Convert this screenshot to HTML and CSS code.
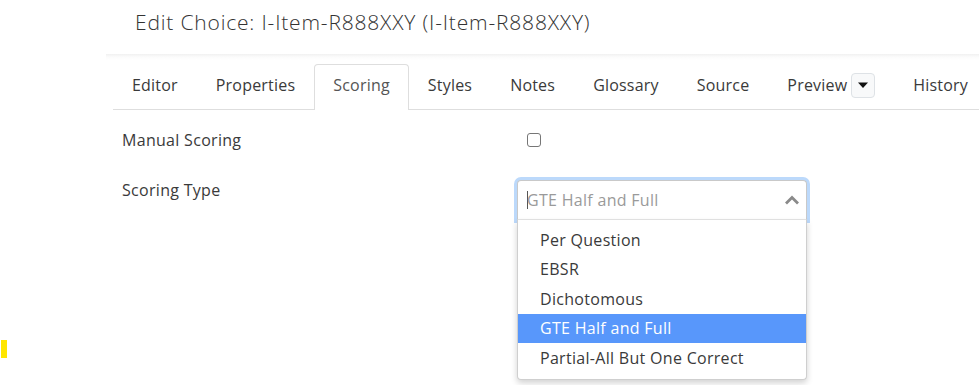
FILE: index.html
```html
<!DOCTYPE html>
<html lang="en">
<head>
<meta charset="utf-8">
<title>Edit Choice</title>
<link rel="stylesheet" href="styles.css">
</head>
<body>
<div class="marker"></div>
<header class="page-head">
  <h1 class="title">Edit Choice: I-Item-R888XXY (I-Item-R888XXY)</h1>
</header>
<main class="panel">
  <nav class="tabs">
    <a class="tab">Editor</a>
    <a class="tab">Properties</a>
    <a class="tab active">Scoring</a>
    <a class="tab">Styles</a>
    <a class="tab">Notes</a>
    <a class="tab">Glossary</a>
    <a class="tab">Source</a>
    <span class="tab tab-split">Preview<span class="split-btn"><svg width="12" height="7" viewBox="0 0 12 7"><path d="M1 0.5h10L6 6z" fill="#111"/></svg></span></span>
    <a class="tab">History</a>
  </nav>
  <form class="form">
    <div class="row row-check">
      <label class="label">Manual Scoring</label>
      <div class="control"><span class="checkbox"></span></div>
    </div>
    <div class="row row-select">
      <label class="label">Scoring Type</label>
      <div class="control">
        <div class="select">
          <div class="select-box">
            <span class="caret"></span><span class="placeholder">GTE Half and Full</span>
            <svg class="chevron" width="16" height="10" viewBox="0 0 16 10"><path d="M2 8.5L8 2.5l6 6" fill="none" stroke="#8a8a8a" stroke-width="2.8"/></svg>
          </div>
          <ul class="options">
            <li class="option">Per Question</li>
            <li class="option">EBSR</li>
            <li class="option">Dichotomous</li>
            <li class="option selected">GTE Half and Full</li>
            <li class="option">Partial-All But One Correct</li>
          </ul>
        </div>
      </div>
    </div>
  </form>
</main>
</body>
</html>
```
FILE: styles.css
```css
* { box-sizing: border-box; }
html, body { margin: 0; padding: 0; background: #fff; }
body {
  font-family: "Open Sans", "Liberation Sans", sans-serif;
  color: #3a3a3a;
  width: 979px;
  height: 385px;
  overflow: hidden;
  position: relative;
}
.marker {
  position: absolute;
  left: 1px;
  top: 340px;
  width: 6px;
  height: 18px;
  background: #ffe600;
}
.page-head {
  height: 54px;
  padding-left: 135px;
  padding-top: 7px;
}
.title {
  margin: 0;
  font-size: 21px;
  font-weight: 300;
  color: #333;
  line-height: 30px;
  letter-spacing: 0.82px;
}
.panel {
  margin-left: 106px;
  background: linear-gradient(#f1f1f1, #fbfbfb 3px, #fff 6px);
  padding-top: 10px;
  height: 331px;
}
.tabs {
  display: flex;
  margin-left: 7px;
  border-bottom: 1px solid #dedede;
  height: 46px;
}
.tab {
  display: flex;
  align-items: center;
  padding: 0 18px 5px;
  height: 46px;
  border: 1px solid transparent;
  border-bottom: none;
  font-size: 16px;
  letter-spacing: 0.2px;
  color: #3a3a3a;
  margin-bottom: -1px;
  white-space: nowrap;
}
.tab.active {
  border-color: #dedede;
  border-radius: 4px 4px 0 0;
  background: #fff;
  color: #555;
}
.split-btn {
  display: inline-flex;
  align-items: center;
  justify-content: center;
  width: 24px;
  height: 25px;
  margin-left: 4px;
  border: 1px solid #dee2e6;
  border-radius: 4px;
  background: #f8f9fa;
}
.form {
  padding-left: 16px;
  padding-top: 10px;
}
.row {
  display: flex;
}
.label {
  width: 395px;
  font-size: 16px;
  letter-spacing: 0.3px;
  line-height: 20px;
  color: #3a3a3a;
}
.row-check { height: 40px; align-items: center; }
.row-select { margin-top: 20px; }
.checkbox {
  display: block;
  margin-left: 10px;
  width: 14px;
  height: 14px;
  border: 1px solid #767676;
  border-radius: 3px;
  background: #fff;
}
.select {
  width: 290px;
}
.select-box {
  height: 40px;
  border: 1px solid #c9c9c9;
  border-bottom-color: #e6e6e6;
  border-radius: 4px 4px 0 0;
  box-shadow: 0 0 0 3px #bcd9fb;
  display: flex;
  align-items: center;
  padding-left: 9px;
  padding-right: 6px;
  background: #fff;
  position: relative;
}
.caret {
  width: 1px;
  height: 18px;
  background: #555;
  margin-right: -1px;
}
.placeholder {
  font-size: 16px;
  letter-spacing: 0.3px;
  color: #9a9a9a;
  flex: 1;
}
.options {
  list-style: none;
  margin: 0;
  padding: 5px 0 6px;
  border: 1px solid #cfcfcf;
  border-top: none;
  border-radius: 0 0 4px 4px;
  box-shadow: 0 3px 6px rgba(0,0,0,0.18);
  background: #fff;
  position: relative;
}
.option {
  height: 29.5px;
  display: flex;
  align-items: center;
  padding-left: 22px;
  font-size: 16px;
  letter-spacing: 0.3px;
  color: #3a3a3a;
}
.option.selected {
  background: #5897fb;
  color: #fff;
}
```
